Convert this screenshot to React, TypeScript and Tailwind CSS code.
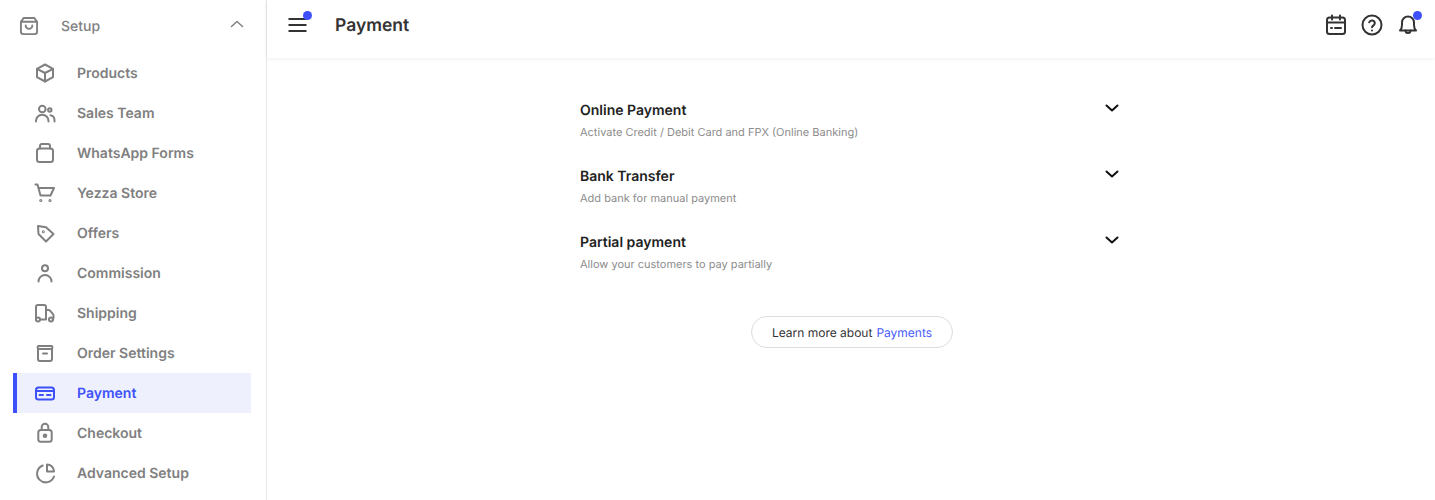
import type { ReactNode } from "react";

function Icon({ children, className = "w-[24px] h-[24px]" }: { children: ReactNode; className?: string }) {
  return (
    <svg className={className} viewBox="0 0 24 24" fill="none" stroke="currentColor" strokeWidth={2} strokeLinecap="round" strokeLinejoin="round">
      {children}
    </svg>
  );
}

const BagIcon = () => (
  <Icon>
    <path d="M6.5 3.5h11l3 4v10.5a2.5 2.5 0 0 1-2.5 2.5H6a2.5 2.5 0 0 1-2.5-2.5V7.500z" />
    <path d="M3.5 7.5h17" />
    <path d="M8.5 11.5a3.5 3.5 0 0 0 7 0" />
  </Icon>
);
const BoxIcon = () => (
  <Icon>
    <path d="M12 3.500l8 4.300v8.400l-8 4.300-8-4.300V7.800z" />
    <path d="M4 7.800l8 4.200 8-4.200M12 12v8.500" />
  </Icon>
);
const UsersIcon = () => (
  <Icon>
    <circle cx="9.300" cy="8" r="3.300" />
    <circle cx="16.800" cy="9" r="1.700" />
    <path d="M3 20.500v-.5a6.250 6.250 0 0 1 12.500 0v.5" />
    <path d="M17.500 14.200c2.300.4 4 2.500 4 5v1.300" />
  </Icon>
);
const FormIcon = () => (
  <Icon>
    <rect x="4" y="7.500" width="16" height="13.500" rx="2.500" />
    <path d="M7 7.500V5a2 2 0 0 1 2-2h6a2 2 0 0 1 2 2v2.500" />
  </Icon>
);
const CartIcon = () => (
  <Icon>
    <path d="M2.500 3.500h2l3 11h10l3.500-7.500H5.800" />
    <circle cx="7.800" cy="19.500" r="0.600" />
    <circle cx="17" cy="19.500" r="0.600" />
  </Icon>
);
const TagIcon = () => (
  <Icon>
    <path d="M5 5l8 1.200 7.500 6.800-7.500 7.500-7.500-7.500z" />
    <circle cx="10.300" cy="10.700" r="0.500" />
  </Icon>
);
const UserIcon = () => (
  <Icon>
    <circle cx="12" cy="7.300" r="3" />
    <path d="M5.500 20.500a6.500 6.500 0 0 1 13 0" />
  </Icon>
);
const TruckIcon = () => (
  <Icon>
    <path d="M3 18V6a2 2 0 0 1 2-2h6a2 2 0 0 1 2 2v12.500H7.500" />
    <path d="M13 9h2.500a2 2 0 0 1 1.500.7l3 3.500a2 2 0 0 1 .5 1.300V17a1 1 0 0 1-1 1" />
    <circle cx="5" cy="18.500" r="2" />
    <circle cx="18" cy="18.500" r="2" />
  </Icon>
);
const ArchiveIcon = () => (
  <Icon>
    <rect x="4.700" y="5" width="14.600" height="3" rx="0.800" />
    <path d="M5 8v10a2 2 0 0 0 2 2h10a2 2 0 0 0 2-2V8" />
    <path d="M10 12.500h4" />
  </Icon>
);
const CardIcon = () => (
  <Icon>
    <rect x="3" y="6.500" width="18" height="12" rx="2.500" />
    <path d="M3 10h18M6.500 14H10M14 14h3.500" />
  </Icon>
);
const LockIcon = () => (
  <Icon>
    <rect x="5.300" y="9" width="13.400" height="11.700" rx="2.500" />
    <path d="M8.700 9V6a3.300 3.300 0 0 1 6.600 0v3" />
    <circle cx="12" cy="14.700" r="1.300" />
  </Icon>
);
const PieIcon = () => (
  <Icon>
    <path d="M9.700 4.500a8.700 8.700 0 1 0 11.300 11" />
    <path d="M14 3.500a7 7 0 0 1 7 7h-7z" />
  </Icon>
);

const items = [
  { label: "Products", icon: <BoxIcon /> },
  { label: "Sales Team", icon: <UsersIcon /> },
  { label: "WhatsApp Forms", icon: <FormIcon /> },
  { label: "Yezza Store", icon: <CartIcon /> },
  { label: "Offers", icon: <TagIcon /> },
  { label: "Commission", icon: <UserIcon /> },
  { label: "Shipping", icon: <TruckIcon /> },
  { label: "Order Settings", icon: <ArchiveIcon /> },
  { label: "Payment", icon: <CardIcon />, active: true },
  { label: "Checkout", icon: <LockIcon /> },
  { label: "Advanced Setup", icon: <PieIcon /> },
];

const sections = [
  { title: "Online Payment", desc: "Activate Credit / Debit Card and FPX (Online Banking)" },
  { title: "Bank Transfer", desc: "Add bank for manual payment" },
  { title: "Partial payment", desc: "Allow your customers to pay partially" },
];

export default function App() {
  return (
    <div className="flex h-[500px] w-full overflow-hidden bg-white font-['Inter',sans-serif] [text-rendering:geometricPrecision]">
      {/* Sidebar */}
      <aside className="w-[267px] flex-shrink-0 border-r border-[#e8e8e8] pl-[13px] pr-[15px] pt-[6px]">
        <div className="flex h-[40px] items-center pl-[4px] pr-[4px] text-[#808080]">
          <span className="flex w-[44px] flex-shrink-0">
            <span className="scale-[0.95]"><BagIcon /></span>
          </span>
          <span className="flex-1 text-[14px] font-medium">Setup</span>
          <svg className="h-[20px] w-[20px] -translate-y-[2px]" viewBox="0 0 20 20" fill="none" stroke="currentColor" strokeWidth={1.5} strokeLinecap="round" strokeLinejoin="round">
            <path d="M4.500 12.500L10 7.500l5.500 5" />
          </svg>
        </div>
        <nav className="mt-[7px] flex flex-col">
          {items.map((item) => (
            <div
              key={item.label}
              className={`flex h-[40px] items-center border-l-4 pl-[16px] ${item.active ? "border-[#3d50fa] bg-[#eef0fd] text-[#3d50fa]" : "border-transparent text-[#808080]"}`}
            >
              <span className="flex w-[44px] flex-shrink-0">{item.icon}</span>
              <span className="text-[14px] font-semibold">{item.label}</span>
            </div>
          ))}
        </nav>
      </aside>

      {/* Main */}
      <main className="flex min-w-0 flex-1 flex-col">
        <header className="flex h-[58px] items-center justify-between pb-[8px] pl-[20px] pr-[15px] shadow-[0_1px_4px_rgba(0,0,0,0.07)]">
          <div className="flex items-center">
            <div className="relative h-[24px] w-[24px] text-[#333333]">
              <svg className="h-[24px] w-[24px]" viewBox="0 0 24 24" fill="none" stroke="currentColor" strokeWidth={2}>
                <path d="M1.500 6h18M1.500 12h18M1.500 18h18" />
              </svg>
              <span className="absolute left-[16px] top-[-2.500px] h-[9px] w-[9px] rounded-full bg-[#3d50fa]" />
            </div>
            <h1 className="ml-[24px] translate-y-[1px] text-[17.500px] font-semibold text-[#333333]">Payment</h1>
          </div>
          <div className="flex items-center gap-[12px] text-[#333333]">
            <Icon>
              <rect x="3" y="4.500" width="18" height="16.500" rx="2.500" />
              <path d="M8 2.500v4M16 2.500v4M3 9.500h18M7 15h1M11 15h6" />
            </Icon>
            <Icon>
              <circle cx="12" cy="12" r="9.500" />
              <path d="M9.200 9.300a2.900 2.900 0 0 1 5.600 1c0 2-2.800 2.500-2.800 4" />
              <path d="M12 17.500h0" />
            </Icon>
            <div className="relative h-[24px] w-[24px]">
              <Icon>
                <path d="M4 17.500c1.500-1.500 2-3 2-5.500V9.500a6 6 0 0 1 12 0V12c0 2.500.5 4 2 5.500z" />
                <path d="M9.500 17.500a2.500 2.500 0 0 0 5 0" />
              </Icon>
              <span className="absolute right-[-2px] top-[-2.500px] h-[9px] w-[9px] rounded-full bg-[#3d50fa]" />
            </div>
          </div>
        </header>

        <div className="flex flex-1 flex-col items-center pt-[42px]">
          <div className="flex w-[540px] -translate-x-[1px] flex-col gap-[24px]">
            {sections.map((s) => (
              <div key={s.title} className="flex h-[42px] items-start justify-between">
                <div>
                  <h2 className="text-[14px] font-semibold leading-[22px] text-[#222222]">{s.title}</h2>
                  <p className="mt-[2px] text-[11px] leading-[16px] text-[#8c8c8c]">{s.desc}</p>
                </div>
                <svg className="h-[16px] w-[16px]" viewBox="0 0 16 16" fill="none" stroke="#111111" strokeWidth={2} strokeLinecap="round" strokeLinejoin="round">
                  <path d="M2.500 5.500L8 10.500l5.500-5" />
                </svg>
              </div>
            ))}
          </div>
          <div className="mt-[42px] flex h-[32px] w-[202px] translate-x-[1px] items-center justify-center rounded-full border border-[#dddddd] pt-[1px] text-[12px] text-[#333333]">
            Learn more about<span className="ml-[4px] text-[#4a5afa]">Payments</span>
          </div>
        </div>
      </main>
    </div>
  );
}
